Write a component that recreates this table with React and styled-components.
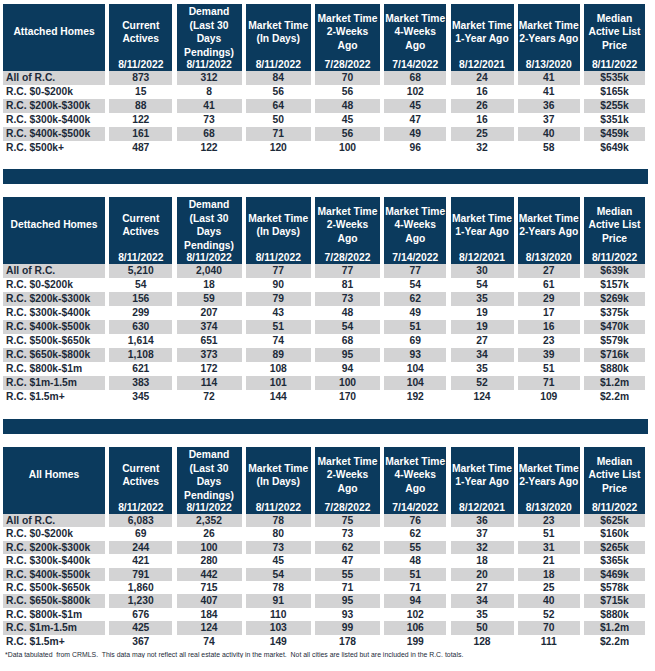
import styled, { createGlobalStyle } from 'styled-components'

const GlobalStyle = createGlobalStyle`
	body {
		margin: 0;
		background: #ffffff;
		font-family: 'Liberation Sans', Arial, sans-serif;
	}
`

const COLS = '102px 63px 65px 65px 65px 62px 63px 62px 61px'

const Page = styled.div`
	padding: 4px 0 0 3px;
	width: 645px;
`

const Table = styled.div`
	display: flex;
	flex-direction: column;
`

const Row = styled.div`
	display: grid;
	grid-template-columns: ${COLS};
	column-gap: 4.25px;
`

const HeadCell = styled.div`
	height: 67px;
	background: #0b3a5d;
	color: #ffffff;
	font-weight: bold;
	font-size: 10.3px;
	display: grid;
	grid-template-rows: 54px 13px;
	text-align: center;
	white-space: nowrap;
`

const HeadLabel = styled.div`
	display: flex;
	align-items: center;
	justify-content: center;
	line-height: 13.5px;
	padding-top: 2px;
`

const HeadDate = styled.div`
	line-height: 13px;
`

const Cell = styled.div`
	height: ${p => p.$h}px;
	line-height: ${p => p.$h}px;
	background: ${p => (p.$shade ? '#d3d3d4' : 'transparent')};
	color: #1c2a39;
	font-weight: bold;
	font-size: 10.3px;
	text-align: ${p => (p.$left ? 'left' : 'center')};
	padding-left: ${p => (p.$left ? '3px' : '0')};
	white-space: nowrap;
`

const Band = styled.div`
	height: 15px;
	background: #0b3a5d;
	margin: ${p => p.$top}px 0 13px;
`

const Footnote = styled.div`
	font-size: 6.9px;
	color: #1c2a39;
	white-space: pre;
	margin-top: 3px;
	padding-left: 2px;
`

const heads = [
	[['Current', 'Actives'], '8/11/2022'],
	[['Demand', '(Last 30', 'Days', 'Pendings)'], '8/11/2022'],
	[['Market Time', '(In Days)'], '8/11/2022'],
	[['Market Time', '2-Weeks', 'Ago'], '7/28/2022'],
	[['Market Time', '4-Weeks', 'Ago'], '7/14/2022'],
	[['Market Time', '1-Year Ago'], '8/12/2021'],
	[['Market Time', '2-Years Ago'], '8/13/2020'],
	[['Median', 'Active List', 'Price'], '8/11/2022'],
]

const attached = [
	['All of R.C.', '873', '312', '84', '70', '68', '24', '41', '$535k'],
	['R.C. $0-$200k', '15', '8', '56', '56', '102', '16', '41', '$165k'],
	['R.C. $200k-$300k', '88', '41', '64', '48', '45', '26', '36', '$255k'],
	['R.C. $300k-$400k', '122', '73', '50', '45', '47', '16', '37', '$351k'],
	['R.C. $400k-$500k', '161', '68', '71', '56', '49', '25', '40', '$459k'],
	['R.C. $500k+', '487', '122', '120', '100', '96', '32', '58', '$649k'],
]

const detached = [
	['All of R.C.', '5,210', '2,040', '77', '77', '77', '30', '27', '$639k'],
	['R.C. $0-$200k', '54', '18', '90', '81', '54', '54', '61', '$157k'],
	['R.C. $200k-$300k', '156', '59', '79', '73', '62', '35', '29', '$269k'],
	['R.C. $300k-$400k', '299', '207', '43', '48', '49', '19', '17', '$375k'],
	['R.C. $400k-$500k', '630', '374', '51', '54', '51', '19', '16', '$470k'],
	['R.C. $500k-$650k', '1,614', '651', '74', '68', '69', '27', '23', '$579k'],
	['R.C. $650k-$800k', '1,108', '373', '89', '95', '93', '34', '39', '$716k'],
	['R.C. $800k-$1m', '621', '172', '108', '94', '104', '35', '51', '$880k'],
	['R.C. $1m-1.5m', '383', '114', '101', '100', '104', '52', '71', '$1.2m'],
	['R.C. $1.5m+', '345', '72', '144', '170', '192', '124', '109', '$2.2m'],
]

const allHomes = [
	['All of R.C.', '6,083', '2,352', '78', '75', '76', '36', '23', '$625k'],
	['R.C. $0-$200k', '69', '26', '80', '73', '62', '37', '51', '$160k'],
	['R.C. $200k-$300k', '244', '100', '73', '62', '55', '32', '31', '$265k'],
	['R.C. $300k-$400k', '421', '280', '45', '47', '48', '18', '21', '$365k'],
	['R.C. $400k-$500k', '791', '442', '54', '55', '51', '20', '18', '$469k'],
	['R.C. $500k-$650k', '1,860', '715', '78', '71', '71', '27', '25', '$578k'],
	['R.C. $650k-$800k', '1,230', '407', '91', '95', '94', '34', '40', '$715k'],
	['R.C. $800k-$1m', '676', '184', '110', '93', '102', '35', '52', '$880k'],
	['R.C. $1m-1.5m', '425', '124', '103', '99', '106', '50', '70', '$1.2m'],
	['R.C. $1.5m+', '367', '74', '149', '178', '199', '128', '111', '$2.2m'],
]

const Section = ({ title, rows, rowH = 14 }) => (
	<Table>
		<Row>
			<HeadCell>
				<HeadLabel>{title}</HeadLabel>
				<HeadDate />
			</HeadCell>
			{heads.map(([lines, date], i) => (
				<HeadCell key={i}>
					<HeadLabel>
						<div>
							{lines.map((l, j) => (
								<div key={j}>{l}</div>
							))}
						</div>
					</HeadLabel>
					<HeadDate>{date}</HeadDate>
				</HeadCell>
			))}
		</Row>
		{rows.map((r, i) => (
			<Row key={i}>
				{r.map((v, j) => (
					<Cell key={j} $h={rowH} $shade={i % 2 === 0} $left={j === 0}>
						{v}
					</Cell>
				))}
			</Row>
		))}
	</Table>
)

const App = () => {
	return (
		<Page>
			<GlobalStyle />
			<Section title='Attached Homes' rows={attached} />
			<Band $top={14} />
			<Section title='Dettached Homes' rows={detached} />
			<Band $top={15} />
			<Section title='All Homes' rows={allHomes} rowH={13.4} />
			<Footnote>
				{'*Data tabulated  from CRMLS.  This data may not reflect all real estate activity in the market.  Not all cities are listed but are included in the R.C. totals.'}
			</Footnote>
		</Page>
	)
}

export default App
